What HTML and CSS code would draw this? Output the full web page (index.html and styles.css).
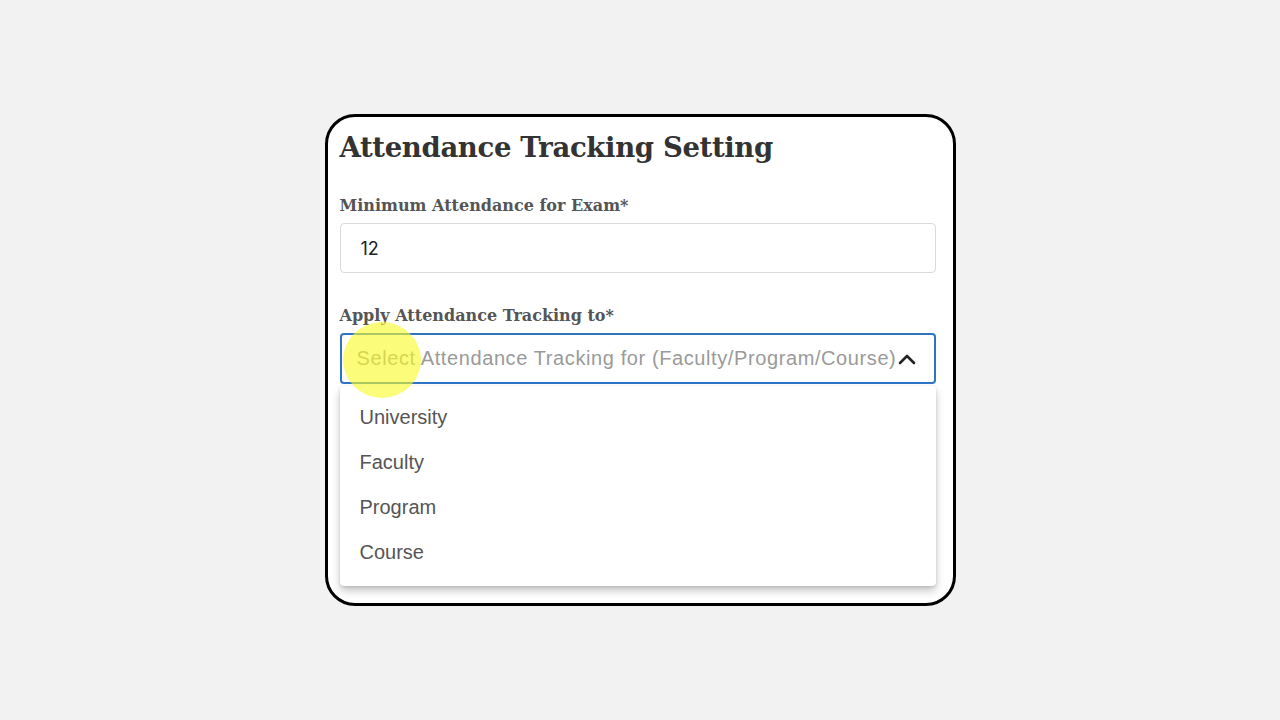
FILE: index.html
```html
<!DOCTYPE html>
<html lang="en">
<head>
<meta charset="utf-8">
<title>Attendance Tracking Setting</title>
<link rel="stylesheet" href="styles.css">
</head>
<body>
<div class="card">
  <h1 class="title">Attendance Tracking Setting</h1>
  <div class="field">
    <label class="label">Minimum Attendance for Exam*</label>
    <div class="input">12</div>
  </div>
  <div class="field field-select">
    <label class="label">Apply Attendance Tracking to*</label>
    <div class="select">
      <span class="placeholder">Select Attendance Tracking for (Faculty/Program/Course)</span>
      <svg class="chevron" width="18" height="12" viewBox="0 0 18 12"><path d="M2 10 L9 3 L16 10" fill="none" stroke="#222" stroke-width="2.6" stroke-linecap="round" stroke-linejoin="round"/></svg>
      <span class="highlight"></span>
    </div>
    <ul class="menu">
      <li class="option">University</li>
      <li class="option">Faculty</li>
      <li class="option">Program</li>
      <li class="option">Course</li>
    </ul>
  </div>
</div>
</body>
</html>
```
FILE: styles.css
```css
html, body {
  margin: 0;
  padding: 0;
}
body {
  background: #f2f2f2;
  height: 720px;
  display: flex;
  align-items: center;
  justify-content: center;
  font-family: "Liberation Sans", Arial, sans-serif;
}
.card {
  width: 631px;
  box-sizing: border-box;
  background: #fff;
  border: 3px solid #000;
  border-radius: 30px;
  padding: 10px 17px 17px 12px;
  margin-top: 0;
}
.title {
  margin: 0;
  font-family: "DejaVu Serif", serif;
  font-weight: bold;
  font-size: 27.5px;
  line-height: 40px;
  color: #333;
  letter-spacing: -0.35px;
}
.field {
  display: flex;
  flex-direction: column;
}
.label {
  font-family: "DejaVu Serif", serif;
  font-weight: bold;
  font-size: 16px;
  line-height: 20px;
  color: #555;
  margin-top: 29px;
  margin-bottom: 7px;
  letter-spacing: 0;
}
.field-select .label {
  margin-top: 33px;
}
.input {
  height: 50px;
  box-sizing: border-box;
  border: 1px solid #d9d9d9;
  border-radius: 4px;
  padding: 0 20px;
  display: flex;
  align-items: center;
  font-family: "Inter", sans-serif;
  font-size: 18px;
  color: #222;
  padding-top: 1px;
}
.select {
  position: relative;
  height: 51px;
  box-sizing: border-box;
  border: 2px solid #2f73c4;
  border-radius: 4px;
  padding: 0 18px 0 15px;
  display: flex;
  align-items: center;
  justify-content: space-between;
}
.placeholder {
  font-size: 20px;
  letter-spacing: 0.6px;
  color: #9a9a9a;
  white-space: nowrap;
}
.chevron {
  flex: none;
  margin-top: 1px;
}
.highlight {
  position: absolute;
  left: 1px;
  top: -13px;
  width: 78px;
  height: 76px;
  border-radius: 50%;
  background: rgba(248, 250, 40, 0.62);
  pointer-events: none;
}
.menu {
  list-style: none;
  margin: 2px 0 0;
  padding: 9px 0 11px;
  background: #fff;
  border-radius: 4px;
  box-shadow: 0 5px 8px rgba(0,0,0,0.22), 0 1px 3px rgba(0,0,0,0.12);
}
.option {
  height: 45px;
  display: flex;
  align-items: center;
  padding: 0 20px;
  font-size: 20px;
  color: #555;
}
```
